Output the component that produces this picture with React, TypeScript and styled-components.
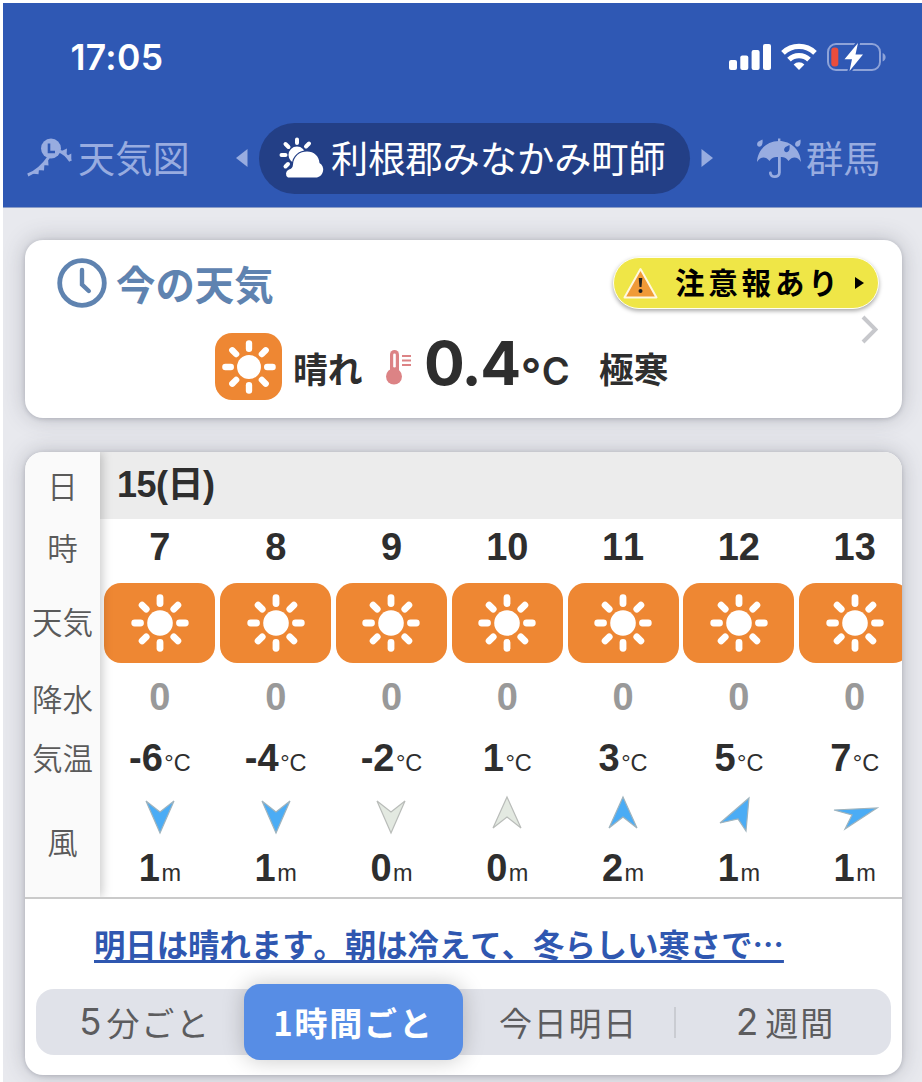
import { FC } from "react";
import styled, { createGlobalStyle } from "styled-components";

const JP = `"Noto Sans CJK JP", sans-serif`;

const GlobalStyle = createGlobalStyle`
  * {
    box-sizing: border-box;
  }
  body {
    margin: 0;
    background: #fff;
    font-family: ${JP};
    font-kerning: none;
    color: #2e2e2e;
  }
`;

const Page = styled.div`
  width: 922px;
  height: 1082px;
  padding: 3px 0 0 3px;
  overflow: hidden;
`;

const Screen = styled.div`
  height: 1079px;
  background: #e8e9ee;
  overflow: hidden;
`;

const Header = styled.header`
  height: 205px;
  background: #2f58b4;
  border-bottom: 1px solid #8b9dc8;
  color: #fff;
`;

const StatusBar = styled.div`
  display: flex;
  align-items: center;
  justify-content: space-between;
  height: 108px;
  padding: 0 35px 0 67.5px;
`;

const Clock = styled.div`
  padding-top: 2px;
  font: 600 35.5px/44px Inter, sans-serif;
  letter-spacing: 0.3px;
`;

const StatusIcons = styled.div`
  display: flex;
  align-items: center;
  gap: 10px;
`;

const Nav = styled.nav`
  display: flex;
  align-items: center;
  height: 94px;
  white-space: nowrap;
`;

const NavItem = styled.div<{ $left: number; $width: number; $gap: number }>`
  display: flex;
  align-items: center;
  flex: none;
  gap: ${({ $gap }) => $gap}px;
  width: ${({ $width }) => $width}px;
  margin-left: ${({ $left }) => $left}px;
  color: #98ace0;
`;

const NavText = styled.span`
  padding-bottom: 3px;
  font-size: 37.2px;
  line-height: 56px;
`;

const Pill = styled.div`
  display: flex;
  align-items: center;
  flex: none;
  width: 431px;
  height: 71px;
  margin: 0 11px;
  padding-left: 20px;
  border-radius: 36px;
  background: #233f86;
  color: #fff;
  gap: 6px;
`;

const Card = styled.section`
  width: 877px;
  margin-left: 22px;
  border-radius: 18px;
  background: #fff;
  box-shadow: 0 0 22px rgba(60, 64, 80, 0.28), 0 1px 4px rgba(60, 64, 80, 0.22);
`;

const NowCard = styled(Card)`
  height: 178px;
  margin-top: 32px;
  padding: 17px 23px 0 32px;
`;

const NowTop = styled.div`
  display: flex;
  justify-content: space-between;
  height: 52px;
`;

const NowTitle = styled.h1`
  display: flex;
  align-items: center;
  gap: 9px;
  margin: 0;
  padding-bottom: 1px;
  color: #5f83b0;
  font-size: 39.4px;
  font-weight: 700;
  line-height: 52px;
`;

const Alert = styled.div`
  display: flex;
  align-items: center;
  width: 266px;
  height: 52px;
  border: 1.5px solid #fffff0;
  border-radius: 26px;
  padding-left: 9px;
  background: #efe647;
  box-shadow: 0 2px 4px rgba(0, 0, 0, 0.35);
  color: #000;
`;

const AlertText = styled.span`
  width: 183px;
  margin-left: 17px;
  padding-bottom: 5px;
  font-size: 29.5px;
  font-weight: 700;
  letter-spacing: 3.8px;
  line-height: 44px;
`;

const AlertMark = styled.svg`
  margin-left: -3px;
`;

const NowBody = styled.div`
  display: flex;
  align-items: flex-start;
  height: 100px;
  padding-left: 158px;
`;

const NowWord = styled.span<{ $width: number }>`
  width: ${({ $width }) => $width}px;
  padding-top: 33px;
  font-size: 34.8px;
  font-weight: 700;
  line-height: 52px;
  flex: none;
`;

const NowIcon = styled.div<{ $top: number; $width: number }>`
  flex: none;
  width: ${({ $width }) => $width}px;
  padding-top: ${({ $top }) => $top}px;
  line-height: 0;
`;

const Temp = styled.div`
  flex: none;
  width: 175px;
  padding-top: 14px;
  font: 700 60.5px/80px Inter, sans-serif;
  letter-spacing: -1.5px;
`;

const TempUnit = styled.span`
  font-size: 38px;
  font-weight: 600;
`;

const Degree = styled.span`
  margin-left: 1px;
  margin-right: 2px;
  vertical-align: -6px;
  font-size: 45px;
  font-weight: 600;
  line-height: 0;
`;

const ForecastCard = styled(Card)`
  height: 623px;
  margin-top: 34px;
  overflow: hidden;
`;

const Table = styled.div`
  display: flex;
  height: 447px;
  border-bottom: 2px solid #cacaca;
  overflow: hidden;
`;

const Labels = styled.div`
  position: relative;
  flex: none;
  width: 75px;
  padding-top: 1px;
  background: #fafafa;
  box-shadow: 2px 0 10px rgba(0, 0, 0, 0.22);
  color: #5a5a5a;
  text-align: center;
  font-size: 30.5px;
  font-weight: 350;
`;

const Label = styled.div<{ $height: number }>`
  height: ${({ $height }) => $height}px;
  line-height: ${({ $height }) => $height}px;
  white-space: nowrap;
`;

const Scroller = styled.div`
  flex: 1;
  overflow: hidden;
`;

const DateRow = styled.div`
  height: 67px;
  padding-left: 17px;
  background: #ececec;
  font: 700 36px/65px "Liberation Sans", ${JP};
  letter-spacing: -0.5px;
`;

const Hours = styled.div`
  display: flex;
  padding-left: 2px;
`;

const HourColumn = styled.div`
  flex: none;
  width: 115.8px;
  text-align: center;
  font-family: "Liberation Sans", ${JP};
`;

const Value = styled.div<{ $height: number; $muted?: boolean }>`
  height: ${({ $height }) => $height}px;
  line-height: ${({ $height }) => $height}px;
  font-size: 38px;
  font-weight: 700;
  color: ${({ $muted }) => ($muted ? "#999" : "#2e2e2e")};
`;

const HourValue = styled(Value)`
  padding-bottom: 8px;
  line-height: 56px;
`;

const Unit = styled.span`
  margin-left: 1.5px;
  font-size: 23.5px;
  font-weight: 400;
`;

const Tile = styled.div<{ $width: number; $height: number }>`
  display: flex;
  align-items: center;
  justify-content: center;
  width: ${({ $width }) => $width}px;
  height: ${({ $height }) => $height}px;
  border-radius: 17px;
  background: #ee8733;
`;

const HourTile = styled(Tile)`
  margin: 0 auto;
`;

const WindRow = styled.div`
  height: 60px;
  padding-top: 9px;
  line-height: 0;
`;

const Comment = styled.a`
  display: block;
  height: 90px;
  padding-left: 69px;
  color: #2f57b0;
  font-size: 31.36px;
  font-weight: 700;
  line-height: 89px;
  white-space: nowrap;
  text-decoration: underline;
  text-decoration-thickness: 2.5px;
  text-underline-offset: 3px;
`;

const Tabs = styled.div`
  display: flex;
  align-items: center;
  width: 855px;
  height: 66px;
  margin-left: 11px;
  border-radius: 18px;
  background: #e0e2e9;
`;

const Tab = styled.div<{ $width: number; $shift?: number; $active?: boolean }>`
  display: flex;
  align-items: center;
  justify-content: center;
  flex: none;
  width: ${({ $width }) => $width}px;
  height: ${({ $active }) => ($active ? 76 : 66)}px;
  padding-left: ${({ $shift = 0 }) => $shift}px;
  padding-bottom: 1px;
  border-radius: 16px;
  background: ${({ $active }) => ($active ? "#578de5" : "transparent")};
  box-shadow: ${({ $active }) =>
    $active ? "0 0 22px rgba(0, 0, 0, 0.22)" : "none"};
  color: ${({ $active }) => ($active ? "#fff" : "#5c5c5e")};
  font-size: 33px;
  font-weight: ${({ $active }) => ($active ? 700 : 400)};
  letter-spacing: 1.8px;
  line-height: 60px;
`;

const Digit = styled.span<{ $gap: number }>`
  margin-right: ${({ $gap }) => $gap}px;
  font-family: Inter, sans-serif;
  font-size: 36.5px;
  letter-spacing: 0;
`;

const Divider = styled.div`
  width: 2px;
  height: 31px;
  background: #caccd2;
`;

const RAYS = [0, 45, 90, 135, 180, 225, 270, 315];

const Sun: FC<{ size: number }> = ({ size }) => (
  <svg width={size} height={size} viewBox="-30 -30 60 60">
    <circle r="12.8" fill="#fff" />
    {RAYS.map((angle) => (
      <line
        key={angle}
        y1="-25.3"
        y2="-19.5"
        stroke="#fff"
        strokeWidth="6.8"
        strokeLinecap="round"
        transform={`rotate(${angle})`}
      />
    ))}
  </svg>
);

// arrow outlines per wind direction, drawn around the centre of the cell
const ARROWS: Record<string, string> = {
  down: "0,18 14,-14 0,-3 -14,-14",
  up: "0,-18 14,13 0,2 -14,13",
  upRight: "10,-17 7,16 -1,4 -19,8",
  right: "22,-7 -10,14 -3,0 -21,-5",
};

const WindArrow: FC<{ dir: string; calm?: boolean }> = ({ dir, calm }) => (
  <svg width="48" height="42" viewBox="-24 -21 48 42">
    <polygon
      points={ARROWS[dir]}
      fill={calm ? "#e3e9e1" : "#4bacf5"}
      stroke={calm ? "#b9bcb9" : "#9fb3bd"}
      strokeWidth="1.2"
    />
  </svg>
);

const HOURS = [
  { hour: 7, rain: 0, temp: -6, dir: "down", wind: 1 },
  { hour: 8, rain: 0, temp: -4, dir: "down", wind: 1 },
  { hour: 9, rain: 0, temp: -2, dir: "down", wind: 0 },
  { hour: 10, rain: 0, temp: 1, dir: "up", wind: 0 },
  { hour: 11, rain: 0, temp: 3, dir: "up", wind: 2 },
  { hour: 12, rain: 0, temp: 5, dir: "upRight", wind: 1 },
  { hour: 13, rain: 0, temp: 7, dir: "right", wind: 1 },
];

const Signal = () => (
  <svg width="42" height="28" viewBox="0 0 42 28">
    <g fill="#fff">
      <rect x="0" y="17" width="8" height="10" rx="2" />
      <rect x="11.3" y="12.5" width="8" height="14.5" rx="2" />
      <rect x="22.6" y="7" width="8" height="20" rx="2" />
      <rect x="34" y="1" width="8" height="26" rx="2" />
    </g>
  </svg>
);

const Wifi = () => (
  <svg width="36" height="28" viewBox="0 0 36 28">
    <g fill="none" stroke="#fff" strokeWidth="5.2">
      <path d="M2 9.800a23 23 0 0 1 32 0" />
      <path d="M8 16.600a14.400 14.400 0 0 1 20 0" />
    </g>
    <path d="M12.600 21.400a8 8 0 0 1 10.800 0L18 27z" fill="#fff" />
  </svg>
);

const Battery = () => (
  <svg width="60" height="30" viewBox="0 0 60 30">
    <rect
      x="1"
      y="2"
      width="52"
      height="26"
      rx="8"
      fill="none"
      stroke="#8ea3d8"
      strokeWidth="2"
    />
    <path d="M55.6 11v8.4c4-1.6 4-6.800 0-8.400z" fill="#8ea3d8" />
    <rect x="4.300" y="5.500" width="7" height="19" rx="3" fill="#ea4d3d" />
    <path
      d="M31 1L17.500 17.200h7.500L22.500 29 36 12.600h-7.500z"
      fill="#fff"
      stroke="#2f58b4"
      strokeWidth="4"
      strokeLinejoin="round"
      paintOrder="stroke"
    />
  </svg>
);

const WeatherMap = () => (
  <svg width="45" height="40" viewBox="0 0 45 40">
    <g fill="none" stroke="#98ace0" strokeWidth="3">
      <path d="M.8 37Q13 32 21.500 19.500" />
      <path d="M31 12.500Q38.500 15 43.500 23" />
    </g>
    <path
      d="M4 35.500l7.500.7.500-5.500zM11 32l6 .5.500-7.500zM16.500 27l5 .5-.500-7.500zM33.500 13.500l6.500-3-.5 7zM39 18.500l5.300-3v7.500z"
      fill="#98ace0"
    />
    <circle cx="24" cy="10.500" r="10" fill="#98ace0" />
    <path d="M22 5.500v8.500h6" fill="none" stroke="#2f58b4" strokeWidth="2.600" />
  </svg>
);

const Umbrella = () => (
  <svg width="46" height="42" viewBox="0 0 46 42">
    <g fill="#98ace0">
      <path d="M1 25C1.500 13 11 4 23 4s21.500 9 22 21c-3.500-5.500-8.500-6-12.500-1-2.500-4-5.500-4-9.500-4s-7 0-9.500 4C9.500 19 4.500 19.500 1 25z" />
      <path d="M22 1.500h2.400v4H22zM6.500 2.500c.5 4.500-.5 7-3 7.200C.5 9.500.5 6 2.500 4.500zM44.500 2.500c.5 4.500-.5 7-3 7.200-3-.2-3-3.700-1-5.200z" />
    </g>
    <path d="M33.500 8c.5 4.500-.5 7-3 7.200-3-.2-3-3.700-1-5.200z" fill="#2f58b4" />
    <path
      d="M23.400 20v15.500c0 5.500-9 5.500-9 .5"
      fill="none"
      stroke="#98ace0"
      strokeWidth="2.800"
      strokeLinecap="round"
    />
  </svg>
);

const SunCloud = () => (
  <svg width="46" height="42" viewBox="0 0 46 42">
    <g stroke="#fff" strokeWidth="4" strokeLinecap="round">
      <path d="M18 2.500v3.500M6.500 7l3 3M30 6.500L27 9.500M2.500 18h4M6.500 29.500L9 27" />
    </g>
    <circle cx="18" cy="18" r="8.500" fill="#fff" />
    <path
      d="M9 40.500a4.500 4.500 0 0 1 1-8c2-.5 4-2 4-5C14.500 19 21 14.500 28 14.500c7 0 12 4.500 12.500 11.500A8 8 0 0 1 38 40.500z"
      fill="#fff"
      stroke="#233f86"
      strokeWidth="2.400"
      paintOrder="stroke"
    />
  </svg>
);

const Arrow: FC<{ left?: boolean }> = ({ left }) => (
  <svg width="12" height="18" viewBox="0 0 12 18">
    <path d={left ? "M11.500 0v18L0 9z" : "M.5 0v18L12 9z"} fill="#98ace0" />
  </svg>
);

const ClockIcon = () => (
  <svg width="50" height="50" viewBox="0 0 50 50">
    <g fill="none" stroke="#5f83b0" strokeLinecap="round">
      <circle cx="25" cy="25" r="22.300" strokeWidth="4.800" />
      <path d="M25 12v14.500l6.800 6.500" strokeWidth="4.400" />
    </g>
  </svg>
);

const WarnIcon = () => (
  <svg width="35" height="32" viewBox="0 0 35 32">
    <path
      d="M17.500 2L33.500 30.500H1.500z"
      fill="#f09a37"
      stroke="#fff8e0"
      strokeWidth="2"
      strokeLinejoin="round"
    />
    <path d="M15.700 11h3.600l-.8 9h-2z" fill="#222" />
    <circle cx="17.500" cy="24" r="2" fill="#222" />
  </svg>
);

const Thermometer = () => (
  <svg width="26" height="35" viewBox="0 0 26 35">
    <g fill="#dc8385">
      <rect x="4" y="0" width="9" height="26" rx="4.500" />
      <circle cx="8" cy="26.500" r="8" />
      <path d="M16 5h9v2h-9zM16 9.500h9v2h-9zM16 14h9v2h-9z" />
    </g>
    <rect x="7.200" y="3.500" width="2.600" height="14" rx="1.300" fill="#fff" />
  </svg>
);

const Chevron = () => (
  <svg width="17" height="29" viewBox="0 0 17 29">
    <path d="M2 2l12.500 12.500L2 27" fill="none" stroke="#c7c8cc" strokeWidth="4" />
  </svg>
);

const App = () => (
  <>
    <GlobalStyle />
    <Page>
      <Screen>
        <Header>
          <StatusBar>
            <Clock>17:05</Clock>
            <StatusIcons>
              <Signal />
              <Wifi />
              <Battery />
            </StatusIcons>
          </StatusBar>
          <Nav>
            <NavItem $left={24} $width={209} $gap={6}>
              <WeatherMap />
              <NavText>天気図</NavText>
            </NavItem>
            <Arrow left />
            <Pill>
              <SunCloud />
              <NavText>利根郡みなかみ町師</NavText>
            </Pill>
            <Arrow />
            <NavItem $left={43} $width={130} $gap={4}>
              <Umbrella />
              <NavText>群馬</NavText>
            </NavItem>
          </Nav>
        </Header>

        <NowCard>
          <NowTop>
            <NowTitle>
              <ClockIcon />
              今の天気
            </NowTitle>
            <Alert>
              <WarnIcon />
              <AlertText>注意報あり</AlertText>
              <AlertMark width="9" height="12" viewBox="0 0 9 12">
                <path d="M0 0v12l9-6z" fill="#000" />
              </AlertMark>
            </Alert>
          </NowTop>
          <NowBody>
            <NowIcon $top={24} $width={78}>
              <Tile $width={67} $height={67}>
                <Sun size={56} />
              </Tile>
            </NowIcon>
            <NowWord $width={93}>晴れ</NowWord>
            <NowIcon $top={41} $width={38}>
              <Thermometer />
            </NowIcon>
            <Temp>
              0.4<Degree>°</Degree>
              <TempUnit>C</TempUnit>
            </Temp>
            <NowWord $width={262}>極寒</NowWord>
            <NowIcon $top={6} $width={18}>
              <Chevron />
            </NowIcon>
          </NowBody>
        </NowCard>

        <ForecastCard>
          <Table>
            <Labels>
              <Label $height={65}>日</Label>
              <Label $height={58}>時</Label>
              <Label $height={91}>天気</Label>
              <Label $height={62}>降水</Label>
              <Label $height={57}>気温</Label>
              <Label $height={111}>風</Label>
            </Labels>
            <Scroller>
              <DateRow>15(日)</DateRow>
              <Hours>
                {HOURS.map(({ hour, rain, temp, dir, wind }) => (
                  <HourColumn key={hour}>
                    <HourValue $height={64}>{hour}</HourValue>
                    <HourTile $width={111} $height={80}>
                      <Sun size={60} />
                    </HourTile>
                    <Value $height={69} $muted>
                      {rain}
                    </Value>
                    <Value $height={53}>
                      {temp}
                      <Unit>°C</Unit>
                    </Value>
                    <WindRow>
                      <WindArrow dir={dir} calm={wind === 0} />
                    </WindRow>
                    <Value $height={47}>
                      {wind}
                      <Unit>m</Unit>
                    </Value>
                  </HourColumn>
                ))}
              </Hours>
            </Scroller>
          </Table>
          <Comment>明日は晴れます。朝は冷えて、冬らしい寒さで…</Comment>
          <Tabs>
            <Tab $width={208} $shift={10}>
              <Digit $gap={5}>5</Digit>分ごと
            </Tab>
            <Tab $width={219} $active>
              1時間ごと
            </Tab>
            <Tab $width={211}>今日明日</Tab>
            <Divider />
            <Tab $width={215} $shift={4}>
              <Digit $gap={7}>2</Digit>週間
            </Tab>
          </Tabs>
        </ForecastCard>
      </Screen>
    </Page>
  </>
);

export default App;
